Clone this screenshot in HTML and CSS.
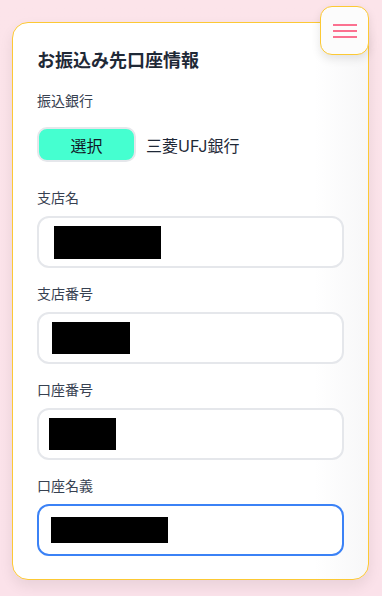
FILE: index.html
```html
<!DOCTYPE html>
<html lang="ja">
<head>
<meta charset="utf-8">
<title>お振込み先口座情報</title>
<link rel="stylesheet" href="styles.css">
</head>
<body>
<div class="page">
  <section class="card">
    <h1 class="title">お振込み先口座情報</h1>
    <div class="group bank-group">
      <div class="label">振込銀行</div>
      <div class="bank-row">
        <button class="select-btn" type="button">選択</button>
        <span class="bank-name">三菱UFJ銀行</span>
      </div>
    </div>
    <div class="group">
      <div class="label">支店名</div>
      <div class="input"><span class="mask" style="width:107px;height:33px;margin-left:15px"></span></div>
    </div>
    <div class="group">
      <div class="label">支店番号</div>
      <div class="input"><span class="mask" style="width:78px;height:32px;margin-left:13px"></span></div>
    </div>
    <div class="group">
      <div class="label">口座番号</div>
      <div class="input"><span class="mask" style="width:67px;height:32px;margin-left:10px"></span></div>
    </div>
    <div class="group">
      <div class="label">口座名義</div>
      <div class="input focused"><span class="mask" style="width:117px;height:26px;margin-left:12px"></span></div>
    </div>
  </section>
  <button class="menu-btn" type="button" aria-label="メニュー">
    <svg width="24" height="14" viewBox="0 0 24 14"><rect x="0" y="0" width="24" height="2" fill="#fb7190"/><rect x="0" y="6" width="24" height="2" fill="#fb7190"/><rect x="0" y="12" width="24" height="2" fill="#fb7190"/></svg>
  </button>
</div>
</body>
</html>
```
FILE: styles.css
```css
html, body {
  margin: 0;
  padding: 0;
}
body {
  width: 382px;
  height: 596px;
  background: linear-gradient(180deg, #fce4ea 0%, #fbe2ea 100%);
  font-family: Inter, "Noto Sans CJK JP", sans-serif;
  color: #1f2937;
  overflow: hidden;
}
.page {
  position: relative;
  padding: 22px 13px 0 12px;
}
.card {
  background: linear-gradient(90deg, #ffffff 85%, #f7f7f8 100%);
  border: 1px solid #fcc934;
  border-radius: 16px;
  padding: 24px 24px 23px 24px;
  box-shadow: 0 6px 14px rgba(0, 0, 0, 0.08);
}
.title {
  margin: 0 0 16px 0;
  font-size: 18px;
  line-height: 28px;
  font-weight: 700;
  color: #1f2937;
}
.group {
  margin-top: 16px;
}
.bank-group {
  margin-top: 0;
  margin-bottom: 26px;
}
.bank-group + .group {
  margin-top: 0;
}
.label {
  font-size: 14px;
  line-height: 20px;
  color: #374151;
  margin-bottom: 8px;
}
.bank-group .label {
  margin-bottom: 16px;
}
.bank-row {
  display: flex;
  align-items: center;
  gap: 10px;
}
.select-btn {
  width: 99px;
  height: 35px;
  background: #45ffd0;
  border: 2px solid #e5e7eb;
  border-radius: 10px;
  font-family: Inter, "Noto Sans CJK JP", sans-serif;
  font-size: 16px;
  color: #111827;
  padding: 0;
}
.bank-name {
  font-size: 16px;
  color: #1f2937;
}
.input {
  height: 48px;
  border: 2px solid #e5e7eb;
  border-radius: 12px;
  background: #fff;
  display: flex;
  align-items: center;
}
.input.focused {
  border-color: #3b82f6;
}
.mask {
  display: block;
  background: #000;
}
.menu-btn {
  position: absolute;
  top: 6px;
  right: 13px;
  width: 49px;
  height: 49px;
  box-sizing: border-box;
  border: 1px solid #fcc934;
  border-radius: 12px;
  background: #fcfcfc;
  box-shadow: 0 4px 10px rgba(0, 0, 0, 0.1);
  display: flex;
  align-items: center;
  justify-content: center;
  padding: 0;
}
.menu-btn svg {
  display: block;
}
```
